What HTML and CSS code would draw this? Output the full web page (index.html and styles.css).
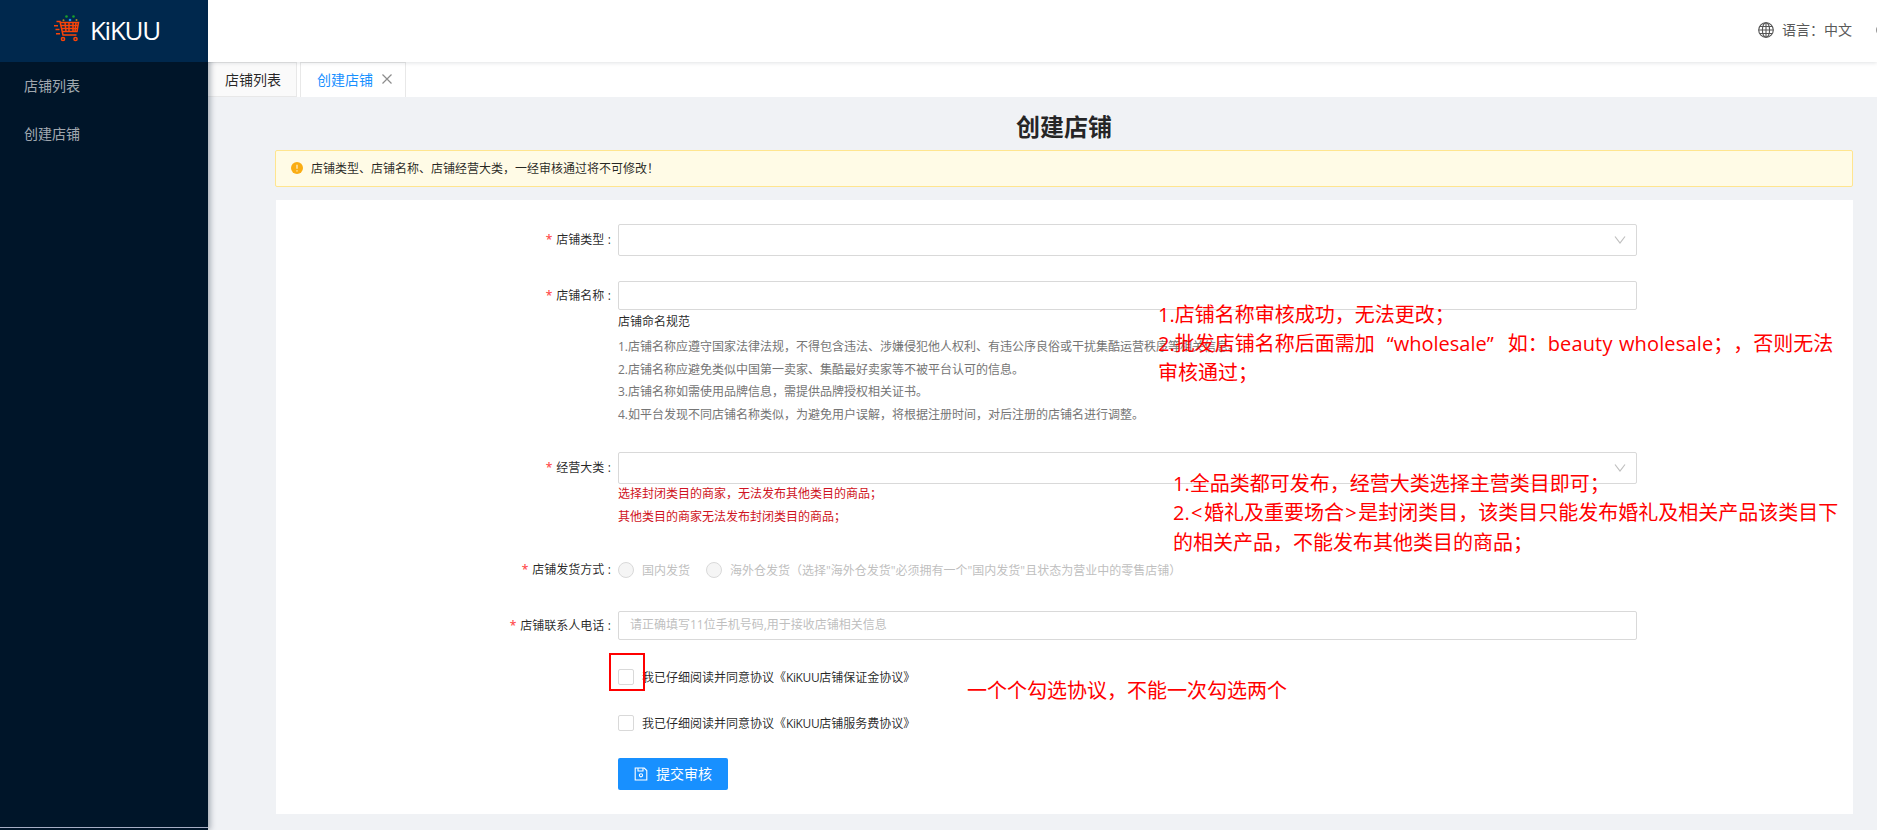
FILE: index.html
```html
<!DOCTYPE html>
<html lang="zh-CN">
<head>
<meta charset="utf-8">
<title>创建店铺</title>
<link rel="stylesheet" href="styles.css">
</head>
<body>
<div class="app">
  <aside class="sidebar">
    <div class="brand">
      <svg class="brand-icon" width="26" height="28" viewBox="0 0 26 28" fill="none" stroke="#fa4408" stroke-width="1.500">
        <path d="M2.500 6.500h3.500l3 13.500h13.500M6.500 7.500h18l-1.500 9h-14.500M7.500 10.500h16M8 13.500h15.500M11 7.500l1 9M15 7.500v9M19 7.500v9M22 7.500l-1 9M0 10.700h4M1.500 14.500h4M2 18.700h4"/>
        <circle cx="9" cy="24" r="1.600"/><circle cx="21.500" cy="24" r="1.600"/>
        <g stroke="none"><circle cx="12.500" cy="1.500" r="1.300" fill="#17a02c"/><circle cx="19.500" cy="1.500" r="1.300" fill="#17a02c"/><circle cx="16" cy="5" r="1.300" fill="#1890ff"/><circle cx="9.500" cy="5.200" r="1" fill="#b58a1c"/><circle cx="22.500" cy="5" r="1" fill="#b58a1c"/></g>
      </svg>
      <span class="brand-name">KiKUU</span>
    </div>
    <nav class="menu">
      <a class="menu-item">店铺列表</a>
      <a class="menu-item">创建店铺</a>
    </nav>
    <div class="sidebar-foot"></div>
  </aside>
  <div class="main">
    <header class="topbar">
      <div class="lang">
        <svg width="16" height="16" viewBox="0 0 16 16" fill="none" stroke="#555" stroke-width="1.100"><circle cx="8" cy="8" r="7.300"/><ellipse cx="8" cy="8" rx="3.600" ry="7.300"/><path d="M8 .7v14.600M.7 8h14.600M1.800 4.500h12.400M1.800 11.500h12.400"/></svg>
        <span>语言：中文</span>
      </div>
      <svg class="cut-icon" width="16" height="16" viewBox="0 0 16 16" fill="none" stroke="#555" stroke-width="1.300"><circle cx="8" cy="8" r="7"/></svg>
    </header>
    <div class="tabs">
      <div class="tab">店铺列表</div>
      <div class="tab tab-active"><span>创建店铺</span>
        <svg width="10" height="10" viewBox="0 0 10 10" stroke="#8c8c8c" stroke-width="1.200"><path d="M.5.5l9 9M9.500.5l-9 9"/></svg>
      </div>
    </div>
    <main class="content">
      <h1 class="title">创建店铺</h1>
      <div class="alert">
        <svg width="12" height="12" viewBox="0 0 12 12"><circle cx="6" cy="6" r="6" fill="#faad14"/><path d="M6 2.800v4M6 8.200v1.200" stroke="#fffbe6" stroke-width="1.100"/></svg>
        <span>店铺类型、店铺名称、店铺经营大类，一经审核通过将不可修改！</span>
      </div>
      <section class="panel">
        <div class="row row-type">
          <label class="label">店铺类型</label>
          <div class="control select"><svg width="12" height="8" viewBox="0 0 12 8" fill="none" stroke="#bfbfbf" stroke-width="1.200"><path d="M1 .5l5 6.500 5-6.500"/></svg></div>
        </div>
        <div class="row row-name">
          <label class="label">店铺名称</label>
          <div class="field">
            <div class="control input"></div>
            <p class="rules-title">店铺命名规范</p>
            <p class="rule">1.店铺名称应遵守国家法律法规，不得包含违法、涉嫌侵犯他人权利、有违公序良俗或干扰集酷运营秩序等相关信息。</p>
            <p class="rule">2.店铺名称应避免类似中国第一卖家、集酷最好卖家等不被平台认可的信息。</p>
            <p class="rule">3.店铺名称如需使用品牌信息，需提供品牌授权相关证书。</p>
            <p class="rule">4.如平台发现不同店铺名称类似，为避免用户误解，将根据注册时间，对后注册的店铺名进行调整。</p>
          </div>
        </div>
        <div class="row row-category">
          <label class="label">经营大类</label>
          <div class="field">
            <div class="control select"><svg width="12" height="8" viewBox="0 0 12 8" fill="none" stroke="#bfbfbf" stroke-width="1.200"><path d="M1 .5l5 6.500 5-6.500"/></svg></div>
            <p class="warn">选择封闭类目的商家，无法发布其他类目的商品；</p>
            <p class="warn">其他类目的商家无法发布封闭类目的商品；</p>
          </div>
        </div>
        <div class="row row-ship">
          <label class="label">店铺发货方式</label>
          <div class="radios">
            <span class="radio"></span><span class="radio-text">国内发货</span>
            <span class="radio"></span><span class="radio-text">海外仓发货（选择"海外仓发货"必须拥有一个"国内发货"且状态为营业中的零售店铺）</span>
          </div>
        </div>
        <div class="row row-phone">
          <label class="label">店铺联系人电话</label>
          <div class="control input placeholder">请正确填写11位手机号码,用于接收店铺相关信息</div>
        </div>
        <div class="agree agree-first"><span class="box"></span><span>我已仔细阅读并同意协议《<span class="latin">KiKUU</span>店铺保证金协议》</span></div>
        <div class="agree"><span class="box"></span><span>我已仔细阅读并同意协议《<span class="latin">KiKUU</span>店铺服务费协议》</span></div>
        <button class="submit">
          <svg width="14" height="14" viewBox="0 0 14 14" fill="none" stroke="#fff" stroke-width="1.100"><path d="M1.200 1h9l2.600 2.600V13H1.200zM4 1v3h5V1"/><circle cx="7" cy="8.300" r="1.600"/></svg>
          <span class="submit-text">提交审核</span>
        </button>
      </section>
    </main>
  </div>
  <div class="note note-name"><div>1.店铺名称审核成功，无法更改；</div><div>2.批发店铺名称后面需加<span class="quote-open">“</span>wholesale<span class="quote-close">”</span>如：<span class="sample">beauty wholesale</span>；，否则无法</div><div>审核通过；</div></div>
  <div class="note note-category"><div>1.全品类都可发布，经营大类选择主营类目即可；</div><div>2.<span class="angle">&lt;</span>婚礼及重要场合<span class="angle">&gt;</span>是封闭类目，该类目只能发布婚礼及相关产品该类目下</div><div>的相关产品，不能发布其他类目的商品；</div></div>
  <div class="note note-agree">一个个勾选协议，不能一次勾选两个</div>
  <div class="mark"></div>
</div>
</body>
</html>
```
FILE: styles.css
```css
* { box-sizing: border-box; }
body { margin: 0; font-family: "Open Sans", "Noto Sans CJK SC", sans-serif; font-size: 14px; color: rgba(0,0,0,.85); }
p, h1 { margin: 0; }
svg { display: block; flex: none; }
.app { position: relative; display: flex; width: 1877px; height: 830px; overflow: hidden; background: #f0f2f5; white-space: nowrap; }
.sidebar { display: flex; flex-direction: column; flex: none; width: 208px; background: #001529; box-shadow: 2px 0 6px rgba(0,21,41,.35); z-index: 1; }
.brand { display: flex; align-items: center; gap: 10px; height: 62px; padding-left: 54px; background: #00284d; }
.brand-icon { margin-top: -5px; }
.brand-name { padding-bottom: 2px; font-size: 26px; font-weight: 500; letter-spacing: -1.300px; line-height: 60px; color: #fff; }
.menu { flex: 1; }
.menu-item { display: block; height: 48px; padding-left: 24px; line-height: 47px; color: rgba(255,255,255,.65); }
.sidebar-foot { height: 3px; border-top: 1px solid #a6adc4; }
.main { flex: 1; min-width: 0; }
.topbar { position: relative; z-index: 1; display: flex; justify-content: flex-end; align-items: center; height: 62px; background: #fff; box-shadow: 0 1px 4px rgba(0,21,41,.12); }
.lang { display: flex; align-items: center; gap: 8px; color: #595959; }
.lang span { padding-bottom: 4px; }
.lang svg { margin-top: -2px; }
.cut-icon { margin: -2px -15px 0 24px; }
.tabs { display: flex; gap: 3px; height: 35px; background: #fff; }
.tab { display: flex; align-items: center; width: 89px; padding: 0 0 2px 17px; background: #fafafa; border: 1px solid #e8e8e8; border-left: 0; }
.tab-active { width: 106px; padding-left: 16px; gap: 9px; color: #1890ff; background: #fff; border-left: 1px solid #e8e8e8; border-bottom: 0; }
.content { padding: 12px 24px 0 67px; }
.title { height: 41px; line-height: 35px; text-align: center; font-size: 24px; font-weight: 700; }
.alert { display: flex; align-items: center; gap: 8px; width: 1578px; height: 37px; padding: 0 0 1px 15px; background: #fffbe6; border: 1px solid #ffe58f; border-radius: 2px; font-size: 12px; }
.alert span { padding-bottom: 1px; }
.panel { width: 1577px; height: 614px; margin: 13px 0 0 1px; padding-top: 24px; background: #fff; font-size: 12px; }
.row { display: flex; }
.row-type { height: 57px; }
.row-name { height: 171px; }
.row-category { height: 106px; }
.row-ship { height: 53px; }
.row-phone { height: 58px; }
.label { width: 342px; padding-right: 7px; text-align: right; line-height: 32px; }
.label::before { content: "*"; margin-right: 4px; color: #ff4d4f; font-weight: 600; }
.label::after { content: ":"; margin-left: 3.500px; }
.row-name .label, .row-phone .label { line-height: 29px; }
.control { width: 1019px; border: 1px solid #d9d9d9; border-radius: 2px; background: #fff; }
.select { display: flex; align-items: center; justify-content: flex-end; height: 32px; padding-right: 10px; }
.input { height: 29px; }
.placeholder { padding-left: 11px; line-height: 25px; color: #bfbfbf; }
.rules-title { height: 25px; line-height: 24px; }
.rule { height: 22.600px; line-height: 23px; color: #757575; }
.warn { height: 23px; line-height: 19px; color: #cf1322; }
.radios { display: flex; align-items: center; height: 24px; color: #bfbfbf; }
.row-ship .label { line-height: 24px; }
.radio { width: 16px; height: 16px; border: 1px solid #d9d9d9; border-radius: 50%; background: #f5f5f5; }
.radio-text { margin: 0 16px 0 8px; }
.agree { display: flex; align-items: center; gap: 8px; height: 16px; margin: 0 0 27px 342px; }
.agree-first { margin-bottom: 30px; }
.latin { letter-spacing: -.4px; }
.box { width: 16px; height: 16px; border: 1px solid #d9d9d9; border-radius: 2px; }
.submit { display: flex; align-items: center; gap: 8px; width: 110px; height: 32px; margin-left: 342px; padding: 0 0 0 16px; border: 0; border-radius: 2px; background: #1890ff; color: #fff; font: inherit; font-size: 14px; }
.submit-text { padding-bottom: 2px; }
.note { position: absolute; z-index: 2; font-size: 20px; line-height: 29px; color: #f00; text-spacing-trim: space-all; }
.note-name { left: 1158px; top: 300px; }
.note-category { left: 1173px; top: 469px; line-height: 29.300px; }
.note-agree { left: 967px; top: 676px; }
.quote-open { margin-left: 12px; }
.quote-close { margin-right: 14px; }
.sample { letter-spacing: .15px; word-spacing: 1px; }
.angle { margin: 0 1.400px; }
.mark { position: absolute; z-index: 2; left: 609px; top: 653px; width: 36px; height: 38px; border: 2px solid #f00; }
```
